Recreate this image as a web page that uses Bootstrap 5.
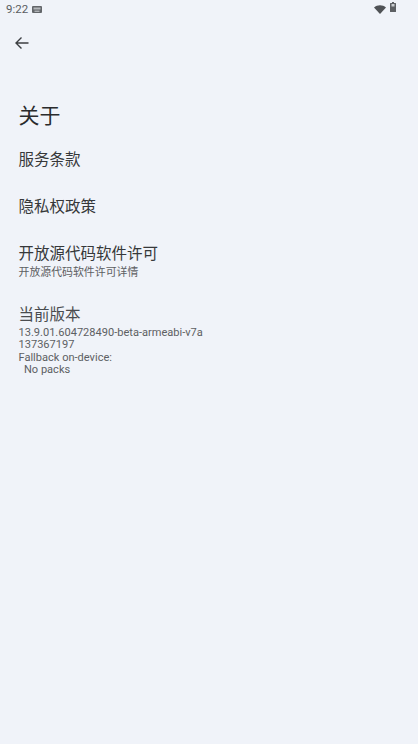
<!doctype html>
<html lang="zh"><head><meta charset="utf-8">
<link href="https://cdn.jsdelivr.net/npm/bootstrap@5.3.0/dist/css/bootstrap.min.css" rel="stylesheet">
<style>
html,body{height:100%;}
body{background:#f0f3f9;font-family:Roboto,"Noto Sans CJK SC",sans-serif;color:#1f1f1f;overflow:hidden;}
.sbar{height:18px;padding:0 22px 0 6px;color:#5a5d61;font-size:11.500px;line-height:18px;}
.backrow{height:50px;padding-left:13px;}
.pg{padding:32px 18.500px 0;}
.ttl{font-size:21px;line-height:32px;margin:0;font-weight:400;color:#2a2b2d;}
.itm{font-size:15.500px;line-height:24px;color:#36383a;}
.itm1{margin-top:16px;}
.itm2{margin-top:23px;}
.itm3{margin-top:23px;}
.itm4{margin-top:23px;color:#4a4c4f;}
.sub{font-size:10.900px;line-height:12.500px;color:#5d6063;white-space:pre;}
.subgap{margin-top:1px;}
.latin{font-size:11.050px;}
</style></head><body>
<div class="sbar d-flex align-items-center justify-content-between">
  <div class="d-flex align-items-center gap-1"><span>9:22</span>
    <svg width="10" height="7" viewBox="0 0 10 7"><rect width="10" height="7" rx="1" fill="#63666a"/><rect x="1.500" y="1.500" width="7" height="2" fill="#b5b8bc"/><rect x="2.500" y="4.700" width="5" height="1" fill="#d0d3d7"/></svg>
  </div>
  <div class="d-flex align-items-center gap-1">
    <svg width="12" height="9" viewBox="0 0 12 9"><path d="M0 2.500C3.300 -.6 8.700 -.6 12 2.500L6 9Z" fill="#4f5256"/></svg>
    <svg class="mb-1" width="6" height="10" viewBox="0 0 6 10"><path d="M2 0h2v1h1.500a.5.5 0 0 1 .5.5V9.500a.5.5 0 0 1-.5.5H.5a.5.5 0 0 1-.5-.5V1.500A.5.5 0 0 1 .5 1H2Z" fill="#5d6064"/><rect x="1.500" y="2" width="3" height="2.500" fill="#c9ccd0"/></svg>
  </div>
</div>
<div class="backrow d-flex align-items-center">
  <svg width="18" height="18" viewBox="0 0 18 18" fill="none" stroke="#3c3f42" stroke-width="1.400"><path d="M15.500 9H3M8.500 3.500 3 9l5.500 5.500"/></svg>
</div>
<main class="pg">
  <h1 class="ttl">关于</h1>
  <div class="itm itm1">服务条款</div>
  <div class="itm itm2">隐私权政策</div>
  <div class="itm itm3">开放源代码软件许可</div>
  <div class="sub subgap">开放源代码软件许可详情</div>
  <div class="itm itm4">当前版本</div>
  <div class="sub latin">13.9.01.604728490-beta-armeabi-v7a
137367197
Fallback on-device:
  No packs</div>
</main>
<script src="https://cdn.jsdelivr.net/npm/bootstrap@5.3.0/dist/js/bootstrap.bundle.min.js"></script>
</body></html>
